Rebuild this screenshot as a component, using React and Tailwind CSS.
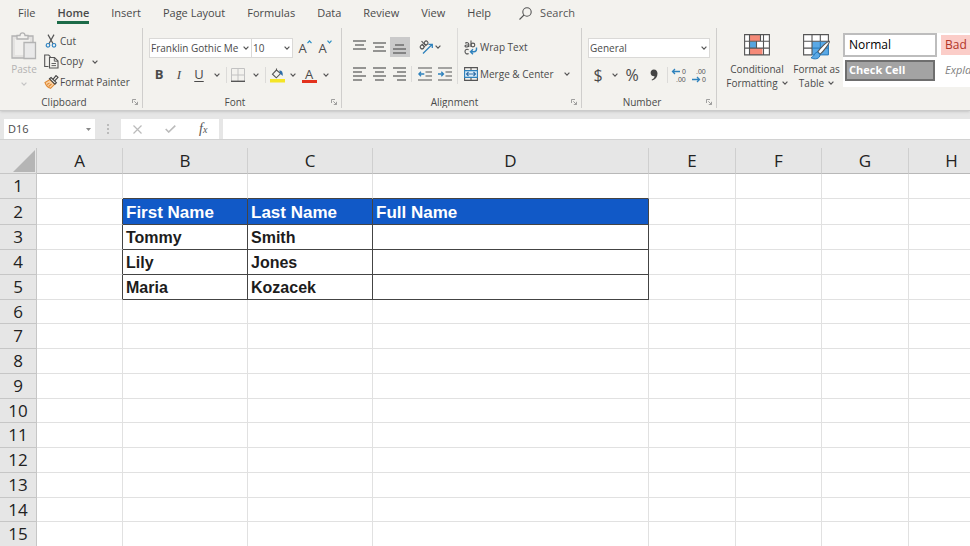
import { useState } from 'react';
import clsx from 'clsx';

const tabs = ['File', 'Home', 'Insert', 'Page Layout', 'Formulas', 'Data', 'Review', 'View', 'Help'];

const columns = [
  { name: 'A', width: 'w-[86px]' },
  { name: 'B', width: 'w-[125px]' },
  { name: 'C', width: 'w-[125px]' },
  { name: 'D', width: 'w-[276px]' },
  { name: 'E', width: 'w-[87px]' },
  { name: 'F', width: 'w-[86px]' },
  { name: 'G', width: 'w-[87px]' },
  { name: 'H', width: '' }
];

const rows = Array.from({ length: 15 }, (_, index) => index + 1);

const cells = {
  B2: 'First Name',
  C2: 'Last Name',
  D2: 'Full Name',
  B3: 'Tommy',
  C3: 'Smith',
  B4: 'Lily',
  C4: 'Jones',
  B5: 'Maria',
  C5: 'Kozacek'
};

function Chevron({ className = 'text-[#555]' }) {
  return (
    <svg viewBox="0 0 6 4" className={clsx('h-1 w-1.5 shrink-0', className)} fill="none" stroke="currentColor" strokeWidth="1.2">
      <path d="M.6.7 3 3.1 5.4.7" />
    </svg>
  );
}

function Launcher() {
  return (
    <svg viewBox="0 0 6 6" className="size-1.5" fill="none" stroke="#8a8a8a" strokeWidth=".8">
      <path d="M.5 4V.5H4M2.3 2.3l3 3M5.5 2.8v2.7H2.8" />
    </svg>
  );
}

function Lines({ rows: segments }) {
  return (
    <svg viewBox="0 0 14 14" className="size-3.5" stroke="#555" strokeWidth="1.2">
      {segments.map(([x1, x2, y]) => (
        <path key={y} d={`M${x1} ${y}H${x2}`} />
      ))}
    </svg>
  );
}

function PasteIcon() {
  return (
    <svg viewBox="0 0 26 28" className="h-7 w-[26px]" fill="none" stroke="#b3b3b3" strokeWidth="1.3">
      <path d="M1 4h21v22H1z" fill="#e4e3e1" />
      <path d="M4 7h15v16H4z" fill="#f1f0ee" stroke="none" />
      <path d="M6 7V3.5h3C9.3 0 13.7 0 14 3.5h3V7z" fill="#f3f2ef" />
      <path d="M13 10.5h11.5v16H13z" fill="#e9e9e9" />
    </svg>
  );
}

function CutIcon() {
  return (
    <svg viewBox="0 0 14 14" className="size-3.5" fill="none" strokeWidth="1.2">
      <path d="M4 .6 9.2 10M10 .6 4.8 10" stroke="#555" />
      <circle cx="4" cy="11.3" r="1.8" stroke="#3286c4" />
      <circle cx="10" cy="11.3" r="1.8" stroke="#3286c4" />
    </svg>
  );
}

function CopyIcon() {
  return (
    <svg viewBox="0 0 15 15" className="size-[15px]" fill="none" stroke="#555" strokeWidth="1.1">
      <path d="M4.5 12.5H.7V1h4l1.8 1.8" />
      <path d="M5.5 3.5h5L14 7v7H5.5z" />
      <path d="M10.3 3.6v3.6H14M7.5 9.5H12M7.5 11.6H12" strokeWidth=".9" />
    </svg>
  );
}

function BrushIcon() {
  return (
    <svg viewBox="0 0 15 14" className="h-3.5 w-[15px]" fill="none" strokeWidth="1.1">
      <path d="M6 4.500 1 7.500c1 3 3 5 5.500 5.800l4.300-4.200z" fill="#fbd3a4" stroke="#e08a35" />
      <path d="M3 9.500 5.500 8M4.700 11.500 7.500 9" stroke="#e08a35" />
      <path d="m5.500 3.800 1.600-1.300 5.300 5.200-1.500 1.500z" fill="#f3f2ef" stroke="#444" />
      <path d="m9 4.300 3-3.700 2 1.800-3.300 3.500" stroke="#444" />
    </svg>
  );
}

function BordersIcon() {
  return (
    <svg viewBox="0 0 14 14" className="size-3.5" fill="none">
      <path d="M.5 13V.5h13V13M7 .5V13M.5 7h13" stroke="#c2c2c2" />
      <path d="M0 13.3h14" stroke="#555" strokeWidth="1.4" />
    </svg>
  );
}

function FillIcon() {
  return (
    <svg viewBox="0 0 15 15" className="size-[15px]" fill="none">
      <path d="M0 11h15v3.5H0z" fill="#f4e526" />
      <path d="M6.5 2 2.5 6.2l3.8 3.6 4.3-4.2zM6.5 2V.5" fill="#f3f2ef" stroke="#555" strokeWidth="1.1" />
      <path d="M9.3 2.6c2.5-.3 3.7 1.5 3.4 5.4L10 5.5z" fill="#2b6ca8" />
    </svg>
  );
}

function FontColorIcon() {
  return (
    <span className="flex flex-col items-center">
      <span className="text-[13px] leading-[12px]">A</span>
      <span className="h-[3px] w-[15px] bg-[#e3321d]" />
    </span>
  );
}

function GrowIcon({ down }) {
  return (
    <span className="flex">
      <span className="text-[13px] leading-4">A</span>
      <svg viewBox="0 0 5 4" className="h-1 w-[5px]" fill="none" stroke="#2b8fc4" strokeWidth="1.2">
        <path d={down ? 'M.5.7l2 2.200 2-2.200' : 'M.5 3.200l2-2.200 2 2.200'} />
      </svg>
    </span>
  );
}

function OrientationIcon() {
  return (
    <svg viewBox="0 0 16 16" className="size-4" fill="none" strokeWidth="1.1">
      <g stroke="#555" transform="rotate(-45 6 6)">
        <circle cx="3.3" cy="6" r="1.9" />
        <path d="M5.3 3.700v4.500" />
        <circle cx="9" cy="6" r="1.9" />
        <path d="M7 1.500v6.700" />
      </g>
      <path d="M5 14.500 13.800 5.700M10.500 5.300h3.800v3.800" stroke="#2f82bd" strokeWidth="1.3" />
    </svg>
  );
}

function IndentIcon({ right }) {
  return (
    <svg viewBox="0 0 14 14" className="size-3.5" fill="none" stroke="#555" strokeWidth="1.2">
      <path d="M0 1h14M7.500 5h6.500M7.500 9h6.500M0 13h14" />
      <path
        d={right ? 'M0 7h5.500M3.300 4.800 5.500 7 3.300 9.200' : 'M.8 7h5.500M3 4.800.8 7 3 9.200'}
        stroke="#2f82bd"
        strokeWidth="1.3"
      />
    </svg>
  );
}

function WrapIcon() {
  return (
    <svg viewBox="0 0 14 15" className="h-[15px] w-3.5" fill="none" stroke="#555" strokeWidth="1.1">
      <path d="M1.200 3.200c1.500-1 3.600-.6 3.600 1V7M4.800 4.800c-2 0-3.800.2-3.800 1.200 0 1.400 2.800 1.300 3.800-.1M7 .5V7" />
      <circle cx="8.9" cy="5" r="1.9" />
      <path d="M4.600 9.700c-1.700-1-3.600-.1-3.600 1.900s1.900 2.900 3.600 1.900" />
      <path d="M12.500 7.500v1.800c0 1.500-.9 2.400-2.500 2.400H6.500M9 9.200 6.500 11.700 9 14.200" stroke="#2f82bd" strokeWidth="1.4" />
    </svg>
  );
}

function MergeIcon() {
  return (
    <svg viewBox="0 0 14 14" className="size-3.5" fill="none" stroke="#555" strokeWidth="1.1">
      <path d="M.6.6h12.800v12.800H.6zM7 .6v3M7 10.400v3" />
      <path d="M.6 3.600h12.800v6.800H.6z" fill="#dcedf9" stroke="#2f82bd" />
      <path d="M2.500 7h9M4.500 5 2.500 7l2 2M9.500 5l2 2-2 2" stroke="#2f6ea8" />
    </svg>
  );
}

function DecimalIcon({ decrease }) {
  return (
    <svg viewBox="0 0 16 18" className="h-[18px] w-4" fontFamily="Liberation Sans, sans-serif" fontSize="7" fill="#555">
      <text x={decrease ? 5 : 11} y="8">{decrease ? '.00' : '0'}</text>
      <text x={decrease ? 11 : 5} y="16">{decrease ? '0' : '.00'}</text>
      <path
        d={decrease ? 'M1 13.500h7.500M6 11 8.500 13.500 6 16' : 'M1.500 5.500H9M4 3 1.500 5.500 4 8'}
        fill="none"
        stroke="#2f82bd"
        strokeWidth="1.3"
      />
    </svg>
  );
}

function ConditionalIcon() {
  return (
    <svg viewBox="0 0 26 22" className="h-[22px] w-[26px]" fill="none">
      <path d="M.6.6h24.800v20.300H.6z" fill="#fff" />
      <path d="M5.500 1h11v6h-11zM5.500 14h13v7h-13z" fill="#f58a78" />
      <path d="M5.500 7.500h7V14h-7z" fill="#56a5df" />
      <path d="M.6.6h24.800v20.300H.6zM.6 7.300h24.800M.6 14.100h24.800M5.500.6v20.300M19.500.6v20.300M12.500 7.300v6.800M16.500.6v6.700" stroke="#555" strokeWidth="1.1" />
    </svg>
  );
}

function TableIcon() {
  return (
    <svg viewBox="0 0 27 26" className="h-[26px] w-[27px]" fill="none">
      <path d="M.6.6h24.800v20.300H.6z" fill="#fff" />
      <path d="M9 7.300h16.400v13.600H9z" fill="#5aa9e6" />
      <path d="M.6 7.300V.6h24.800v6.700M.6 7.300v13.600H9M.6 7.300h24.800M.6 14.100H9M9 .6v20.300M17.300.6v6.700" stroke="#555" strokeWidth="1.1" />
      <path d="M9 14.100h16.400M17.300 7.300v13.600M25.400 7.300v13.600H9" stroke="#2477b8" />
      <path d="M26.300 7.200c-1.500-.6-9 7-11.600 10.700l2.500 2.300c3.500-3.200 9.800-11.400 9.100-13z" fill="#fff" stroke="#555" strokeWidth="1.1" />
      <path d="M14.300 18c-3 .2-2.500 4.700-6.300 5.700 3.500 2.300 9.200 1.200 9-3.300z" fill="#5aa9e6" stroke="#2477b8" />
    </svg>
  );
}

function Tool({ label, className = 'w-5', active, children }) {
  return (
    <button
      type="button"
      aria-label={label}
      className={clsx('flex h-5 shrink-0 items-center justify-center', active && 'bg-[#cacaca]', className)}
    >
      {children}
    </button>
  );
}

function Separator() {
  return <span className="mx-px h-4 w-px shrink-0 bg-[#dcdbd9]" />;
}

function Picker({ label, value, className }) {
  return (
    <label className={clsx('relative flex h-5 items-center border border-[#dad9d7] bg-white', className)}>
      <select aria-label={label} defaultValue={value} className="w-full appearance-none bg-transparent pl-px leading-4 outline-none">
        <option>{value}</option>
      </select>
      <span className="pointer-events-none absolute right-0.5">
        <Chevron />
      </span>
    </label>
  );
}

function Group({ title, className, children }) {
  return (
    <section className={clsx('flex shrink-0 flex-col border-r border-[#cfcecc]', className)}>
      <div className="flex-1">{children}</div>
      <footer className="flex h-3 items-center pr-1">
        <h2 className="flex-1 pl-1 pr-2 text-center leading-3">{title}</h2>
        <button type="button" aria-label={`${title} settings`}>
          <Launcher />
        </button>
      </footer>
    </section>
  );
}

function TabBar() {
  const [active, setActive] = useState('Home');

  return (
    <nav className="flex h-7 items-start pl-[18px] text-[11px]">
      <div className="flex gap-[22px]">
        {tabs.map((tab) => (
          <button
            key={tab}
            type="button"
            onClick={() => setActive(tab)}
            className={clsx('h-6 border-b-[3px] pt-1 leading-4', tab === active ? 'border-[#1c6b48] font-semibold' : 'border-transparent')}
          >
            {tab}
          </button>
        ))}
      </div>
      <label className="ml-7 flex h-[27px] items-center gap-2">
        <svg viewBox="0 0 13 13" className="size-[13px]" fill="none" stroke="#555" strokeWidth="1.1">
          <circle cx="8" cy="5" r="4.2" />
          <path d="m5 8-4.5 4.5" />
        </svg>
        <input type="text" aria-label="Search" placeholder="Search" className="w-24 bg-transparent outline-none placeholder:text-[#555]" />
      </label>
    </nav>
  );
}

function ClipboardGroup() {
  return (
    <Group title="Clipboard" className="w-[143px]">
      <div className="flex pl-2.5">
        <button type="button" className="flex w-7 flex-col items-center pt-1 leading-[18px] text-[#b3b3b3]">
          <PasteIcon />
          Paste
          <Chevron className="mt-1 text-[#c4c4c4]" />
        </button>
        <div className="flex flex-col items-start pl-1.5 pt-[3px]">
          <button type="button" className="flex h-5 items-center gap-0.5">
            <CutIcon />
            Cut
          </button>
          <button type="button" className="flex h-[21px] items-center gap-px">
            <CopyIcon />
            Copy
            <Chevron className="ml-2 text-[#555]" />
          </button>
          <button type="button" className="flex h-5 items-center gap-px">
            <BrushIcon />
            Format Painter
          </button>
        </div>
      </div>
    </Group>
  );
}

function FontGroup() {
  return (
    <Group title="Font" className="w-[199px]">
      <div className="flex flex-col gap-[7px] pl-1.5 pt-2.5">
        <div className="flex">
          <Picker label="Font" value="Franklin Gothic Me" className="w-[103px]" />
          <Picker label="Font size" value="10" className="-ml-px w-[42px]" />
          <Tool label="Increase font size" className="ml-0.5 w-5"><GrowIcon /></Tool>
          <Tool label="Decrease font size"><GrowIcon down /></Tool>
        </div>
        <div className="flex items-center text-[13px]">
          <Tool label="Bold"><b>B</b></Tool>
          <Tool label="Italic"><i className="font-['Liberation_Serif',serif]">I</i></Tool>
          <Tool label="Underline"><u className="underline-offset-2">U</u></Tool>
          <Tool label="Underline style" className="w-4"><Chevron /></Tool>
          <Separator />
          <Tool label="Borders"><BordersIcon /></Tool>
          <Tool label="Border style" className="w-4"><Chevron /></Tool>
          <Separator />
          <Tool label="Fill color"><FillIcon /></Tool>
          <Tool label="Fill color options" className="w-3"><Chevron /></Tool>
          <Tool label="Font color"><FontColorIcon /></Tool>
          <Tool label="Font color options" className="w-3.5"><Chevron /></Tool>
        </div>
      </div>
    </Group>
  );
}

function AlignmentGroup() {
  return (
    <Group title="Alignment" className="w-60">
      <div className="flex pl-2">
        <div className="flex flex-col gap-[7px] pt-[9px]">
          <div className="flex items-center">
            <Tool label="Top align"><Lines rows={[[0, 13, 1], [2, 11, 5], [0, 13, 9]]} /></Tool>
            <Tool label="Middle align"><Lines rows={[[0, 13, 3], [2, 11, 7], [0, 13, 11]]} /></Tool>
            <Tool label="Bottom align" active><Lines rows={[[2, 11, 5], [0, 13, 9], [0, 13, 13]]} /></Tool>
            <Tool label="Orientation" className="ml-2 w-4"><OrientationIcon /></Tool>
            <Tool label="Orientation options" className="w-2"><Chevron /></Tool>
          </div>
          <div className="flex items-center">
            <Tool label="Align left"><Lines rows={[[0, 13, 1], [0, 9, 5], [0, 13, 9], [0, 9, 13]]} /></Tool>
            <Tool label="Center"><Lines rows={[[0, 13, 1], [2, 11, 5], [0, 13, 9], [2, 11, 13]]} /></Tool>
            <Tool label="Align right"><Lines rows={[[0, 13, 1], [4, 13, 5], [0, 13, 9], [4, 13, 13]]} /></Tool>
            <Separator />
            <Tool label="Decrease indent" className="ml-0.5 w-5"><IndentIcon /></Tool>
            <Tool label="Increase indent"><IndentIcon right /></Tool>
          </div>
        </div>
        <div className="ml-0.5 flex flex-col items-start gap-[7px] border-l border-[#dcdbd9] pl-1.5 pt-[9px]">
          <button type="button" className="flex h-5 items-center gap-0.5">
            <WrapIcon />
            Wrap Text
          </button>
          <button type="button" className="flex h-5 items-center gap-0.5">
            <MergeIcon />
            Merge &amp; Center
            <Chevron className="ml-2 text-[#555]" />
          </button>
        </div>
      </div>
    </Group>
  );
}

function NumberGroup() {
  return (
    <Group title="Number" className="w-[135px]">
      <div className="flex flex-col gap-[7px] px-1.5 pt-2.5">
        <Picker label="Number format" value="General" className="w-full" />
        <div className="flex items-center text-base">
          <Tool label="Accounting format">$</Tool>
          <Tool label="Currency options" className="w-3.5"><Chevron /></Tool>
          <Tool label="Percent style">%</Tool>
          <Tool label="Comma style" className="w-6">
            <svg viewBox="0 0 8 12" className="h-3 w-2" fill="#444">
              <path d="M3.800.5C6.300.5 7.500 2.300 7.500 4.600c0 3.400-2 6-5.500 7l-.4-.9c1.800-.8 2.900-2 3-3.500C2.300 7.400.6 6 .6 3.900.6 2 1.900.5 3.800.5z" />
            </svg>
          </Tool>
          <Separator />
          <Tool label="Increase decimal"><DecimalIcon /></Tool>
          <Tool label="Decrease decimal"><DecimalIcon decrease /></Tool>
        </div>
      </div>
    </Group>
  );
}

function StylesGroup() {
  return (
    <section aria-label="Styles" className="flex min-w-0 flex-1 pl-[7px] leading-3.5">
      <button type="button" className="flex w-[66px] shrink-0 flex-col items-center pt-1.5">
        <ConditionalIcon />
        <span className="mt-1.5">Conditional</span>
        <span className="flex items-center gap-1">Formatting <Chevron /></span>
      </button>
      <button type="button" className="flex w-[53px] shrink-0 flex-col items-center whitespace-nowrap pt-1.5">
        <TableIcon />
        <span className="mt-0.5">Format as</span>
        <span className="flex items-center gap-1">Table <Chevron /></span>
      </button>
      <div className="mt-[5px] grid h-[54px] min-w-0 flex-1 grid-cols-[94px_minmax(0,1fr)] grid-rows-[24px_21px] gap-x-1 gap-y-[3px] overflow-hidden bg-white text-left text-xs">
        <button type="button" className="border-2 border-[#bdbdbd] pl-1 text-left text-black">Normal</button>
        <button type="button" className="my-0.5 overflow-hidden bg-[#fbcdc8] pl-1 text-left text-[#b23427]">Bad</button>
        <button type="button" className="mx-0.5 border-2 border-[#6e6e6e] bg-[#a3a3a3] pl-0.5 text-left text-[11px] font-bold text-white">Check Cell</button>
        <button type="button" className="overflow-hidden pl-1 text-left text-[11px] italic text-[#7f7f7f]">Explanatory</button>
      </div>
    </section>
  );
}

function FormulaBar() {
  return (
    <div className="flex h-5 items-stretch pl-1 text-[11px]">
      <label className="flex w-[91px] items-center bg-white pr-1">
        <input aria-label="Name box" defaultValue="D16" className="min-w-0 flex-1 bg-transparent pl-1 outline-none" />
        <svg viewBox="0 0 5 3" className="h-[3px] w-[5px]" fill="#888"><path d="M0 0h5L2.5 3z" /></svg>
      </label>
      <svg viewBox="0 0 2 10" className="mx-3 h-2.5 w-0.5 self-center" fill="#bbb">
        <path d="M0 0h2v2H0zM0 4h2v2H0zM0 8h2v2H0z" />
      </svg>
      <div className="flex w-[98px] items-center justify-around bg-white text-[#bbb]">
        <button type="button" aria-label="Cancel">
          <svg viewBox="0 0 9 9" className="size-[9px]" fill="none" stroke="currentColor" strokeWidth="1.2"><path d="m.5.5 8 8M8.5.5l-8 8" /></svg>
        </button>
        <button type="button" aria-label="Enter">
          <svg viewBox="0 0 11 8" className="h-2 w-[11px]" fill="none" stroke="currentColor" strokeWidth="1.6"><path d="m.7 4 3 3L10.3.7" /></svg>
        </button>
        <button type="button" className="font-['Liberation_Serif',serif] text-sm italic leading-4 text-[#555]">
          f<span className="text-[10px]">x</span>
        </button>
      </div>
      <input aria-label="Formula bar" className="ml-1 min-w-0 flex-1 bg-white px-2 outline-none" />
    </div>
  );
}

// The table sits on B2:D5, so the cells left of it and above it carry its outer edge.
function cellBorder(col, row) {
  const tableRow = row >= 2 && row <= 5;
  const right = tableRow && 'ABCD'.includes(col) ? 'border-r-[#444]' : 'border-r-[#e1e1e1]';
  const bottom = row <= 5 && 'BCD'.includes(col) ? 'border-b-[#444]' : 'border-b-[#e1e1e1]';
  return `${right} ${bottom}`;
}

function rowHeight(row) {
  if (row === 2) {
    return 'h-[26px]';
  }
  return row % 4 === 2 ? 'h-6' : 'h-[25px]';
}

function Sheet() {
  return (
    <table className="w-full min-w-[995px] table-fixed border-separate border-spacing-0">
      <colgroup>
        <col className="w-[37px]" />
        {columns.map((column) => (
          <col key={column.name} className={column.width} />
        ))}
      </colgroup>
      <thead>
        <tr className="h-[26px] bg-[#e6e6e6] text-[17px] leading-6 text-[#222]">
          <th className="border-b border-r border-[#c6c6c6] p-0">
            <svg viewBox="0 0 22 22" className="ml-auto mr-px size-[22px]" fill="#b5b5b5"><path d="M22 0v22H0z" /></svg>
          </th>
          {columns.map((column) => (
            <th key={column.name} scope="col" className="border-b border-r border-b-[#b8b8b8] border-r-[#cfcfcf] p-0 pt-px font-normal">
              {column.name}
            </th>
          ))}
        </tr>
      </thead>
      <tbody>
        {rows.map((row) => (
          <tr key={row} className={rowHeight(row)}>
            <th scope="row" className="border-b border-r border-[#c6c6c6] bg-[#e6e6e6] p-0 text-[17px] font-normal leading-5 text-[#222]">
              {row}
            </th>
            {columns.map(({ name }) => (
              <td
                key={name}
                className={clsx(
                  "border-b border-r pb-0 pl-[3px] pr-0 pt-0.5 font-['Liberation_Sans',sans-serif] font-bold leading-5",
                  cellBorder(name, row),
                  row === 2 && 'BCD'.includes(name) ? 'bg-[#1159c7] text-[17px] text-white' : 'bg-white text-base text-[#1c1c1c]'
                )}
              >
                {cells[`${name}${row}`]}
              </td>
            ))}
          </tr>
        ))}
      </tbody>
    </table>
  );
}

function App() {
  return (
    <div className="h-screen overflow-hidden bg-[#e6e6e6] font-['Open_Sans','Noto_Sans',sans-serif] text-[#4a4a4a]">
      <header className="border-b border-[#cbcbcb] bg-[#f3f2ee] pb-0.5 shadow-sm">
        <TabBar />
        <div className="flex h-20 overflow-hidden text-[10px]">
          <ClipboardGroup />
          <FontGroup />
          <AlignmentGroup />
          <NumberGroup />
          <StylesGroup />
        </div>
      </header>
      <main className="pt-2">
        <FormulaBar />
        <div className="overflow-hidden border-t border-[#d2d2d2] pt-2">
          <Sheet />
        </div>
      </main>
    </div>
  );
}

export default App;
